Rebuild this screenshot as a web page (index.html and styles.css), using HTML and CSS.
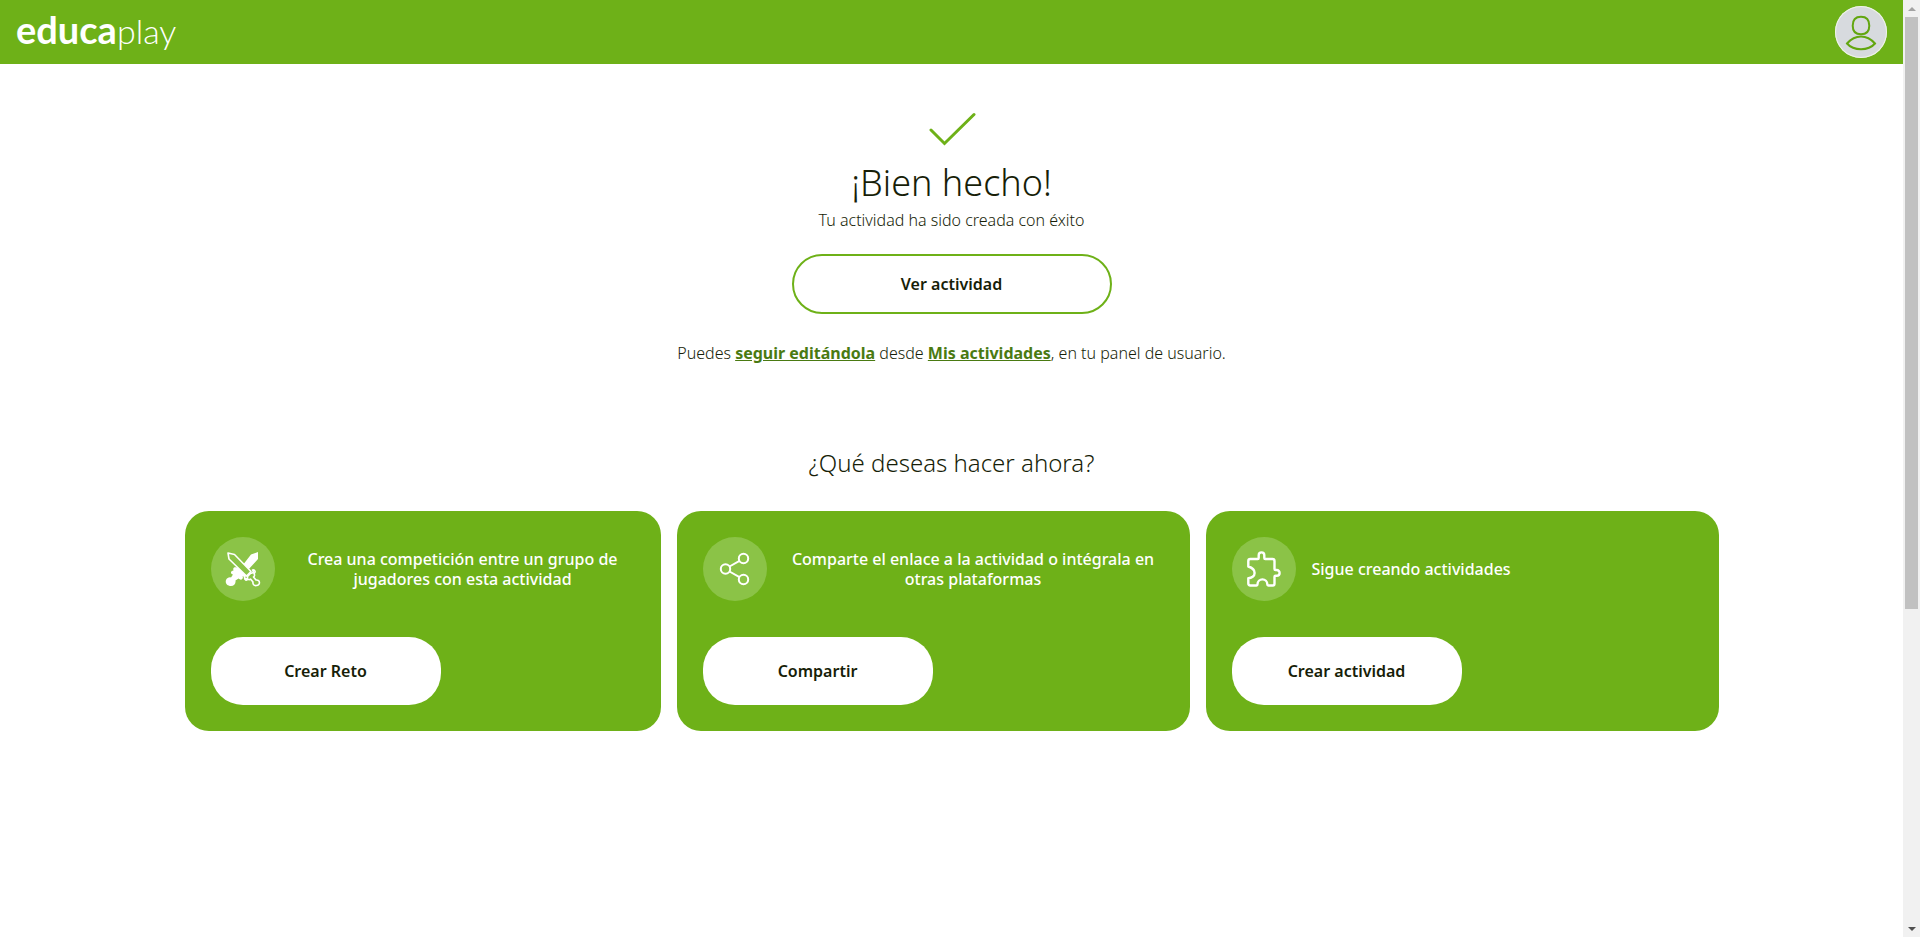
FILE: index.html
```html
<!DOCTYPE html>
<html lang="es">
<head>
<meta charset="utf-8">
<meta name="viewport" content="width=device-width, initial-scale=1">
<title>Educaplay</title>
<link rel="stylesheet" href="styles.css">
</head>
<body>
<div class="page">
  <header class="topbar">
    <a class="logo" href="#" aria-label="educaplay"><b>educa</b><span>play</span></a>
    <button class="avatar" type="button" aria-label="Usuario">
      <svg width="52" height="52" viewBox="0 0 52 52" fill="none" stroke="#62a60f" stroke-width="2">
        <path d="M26 10.800c5.500 0 8.300 3.600 8.300 8.900s-2.800 8.600-8.300 8.600-8.300-3.300-8.300-8.600 2.800-8.900 8.300-8.900z"/>
        <path d="M12 37.500C16 33 20.500 30.500 26 30.500S36 33 40 37.500C36.500 41.500 31.500 43.300 26 43.300S15.500 41.500 12 37.500z"/>
      </svg>
    </button>
  </header>

  <main class="main">
    <section class="done">
      <svg class="check" width="48" height="34" viewBox="0 0 48 34" fill="none" stroke="#6eb118" stroke-width="3" stroke-linecap="round"><path d="M3 18l13.500 13.500L46 2.500"/></svg>
      <h1 class="title">¡Bien hecho!</h1>
      <p class="text">Tu actividad ha sido creada con éxito</p>
      <button class="button button-outline" type="button">Ver actividad</button>
      <p class="text">Puedes <a class="link" href="#">seguir editándola</a> desde <a class="link" href="#">Mis actividades</a>, en tu panel de usuario.</p>
    </section>

    <h2 class="subtitle">¿Qué deseas hacer ahora?</h2>

    <section class="cards">
      <article class="card">
        <div class="card-head">
          <span class="badge">
            <svg width="36" height="36" viewBox="0 0 36 36" fill="none" stroke="#fff" stroke-width="1.600" stroke-linejoin="round">
              <path fill="#fff" stroke="none" d="M33 1v7L22.500 19.500l-5-5L26 3.500zM12 15l10 10-2 1c-1 0-2-.500-2.500-1 1.500 3-1.500 5-4 2.500l-3 2c.500 3-1.500 5.500-4.500 5.500-4 0-6-3-5-6 1-2 3-3 5-2.500l2-3c-3-.500-2.500-4 .500-4-1-3 1-4 3.500-3z"/>
              <path fill="#8bc347" d="M3 2l6.500 1.500L26 20.500l-4.500 4.500L4 8z"/>
              <path fill="#8bc347" d="M19.500 26.500c1.500 2.500 3.500 1 3-1l3.500-3.500c2 .500 3-1.500 1.500-3 2.500-.500 3.500 2 1.500 3.500 1 1.500.500 3-.500 3.500l2.500 3c4.500-.500 4.500 5.500.500 5.500-2.500.500-4-1.500-3.500-3.500L25.500 28c-1 1-2 .500-2.500 0-1.500 2-3.500 1-3.500-1.500z"/>
            </svg>
          </span>
          <p class="card-text">Crea una competición entre un grupo de jugadores con esta actividad</p>
        </div>
        <button class="button button-solid" type="button">Crear Reto</button>
      </article>

      <article class="card">
        <div class="card-head">
          <span class="badge">
            <svg width="32" height="34" viewBox="0 0 32 34" fill="none" stroke="#fff" stroke-width="2">
              <circle cx="6.500" cy="17" r="4.700"/><circle cx="24.500" cy="6.500" r="4.700"/><circle cx="24.500" cy="27.500" r="4.700"/>
              <path d="M10.500 14.500l10-5.700M10.500 19.500l10 5.700"/>
            </svg>
          </span>
          <p class="card-text">Comparte el enlace a la actividad o intégrala en otras plataformas</p>
        </div>
        <button class="button button-solid" type="button">Compartir</button>
      </article>

      <article class="card">
        <div class="card-head">
          <span class="badge">
            <svg width="36" height="38" viewBox="0 0 36 38" fill="none" stroke="#fff" stroke-width="2.400" stroke-linejoin="round">
              <path d="M4.300 9h7.400q1 0 1-1V5.200a2.800 2.800 0 0 1 5.600 0V8q0 1 1 1h7.200q2 0 2 2v8q0 1 1 1h1.200a2.900 2.900 0 0 1 0 5.800h-1.200q-1 0-1 1v6.700q0 2-1.700 2h-4.500q-1 0-1-1.200a4.900 4.900 0 0 0-9.800 0q0 1.200-1 1.200H4.300q-2 0-2-2v-5.300c3.200 0 6.300-2 6.300-5.300s-3.100-5.400-6.300-6.400V11q0-2 2-2z"/>
            </svg>
          </span>
          <p class="card-text">Sigue creando actividades</p>
        </div>
        <button class="button button-solid" type="button">Crear actividad</button>
      </article>
    </section>
  </main>
</div>
<div class="scrollbar" aria-hidden="true">
  <span class="arrow arrow-up"></span>
  <span class="thumb"></span>
  <span class="rest"></span>
  <span class="arrow arrow-down"></span>
</div>
</body>
</html>
```

FILE: styles.css
```css
* {
  box-sizing: border-box;
}

body {
  margin: 0;
  display: flex;
  min-height: 100vh;
  background: #fff;
  color: #171e08;
  font-family: "Noto Sans", "Open Sans", sans-serif;
  font-size: 16px;
  line-height: 20px;
}

.page {
  flex: 1;
  min-width: 0;
}

.topbar {
  display: flex;
  align-items: center;
  justify-content: space-between;
  height: 64px;
  padding: 0 16px;
  background: #6eb118;
}

.logo {
  padding-bottom: 4px;
  color: #fff;
  font-family: Lato, sans-serif;
  font-size: 34px;
  line-height: 56px;
  font-weight: 300;
  text-decoration: none;
}

.logo b {
  font-size: 38px;
  font-weight: 700;
}

.avatar {
  width: 52px;
  height: 52px;
  padding: 0;
  border: 0;
  border-radius: 50%;
  background: #d7dade;
  box-shadow: inset 0 0 0 1px #eef4e6;
}

.avatar svg {
  display: block;
}

.main {
  padding: 48px 24px;
}

.done {
  display: flex;
  flex-direction: column;
  align-items: center;
  text-align: center;
}

.check {
  display: block;
}

.title {
  margin: 13px 0 3px;
  font-size: 36px;
  line-height: 48px;
  font-weight: 300;
}

.text {
  margin: 0;
  font-weight: 300;
}

.link {
  color: #4a7a12;
  font-weight: 700;
}

.button {
  border: 0;
  background: #fff;
  color: #171e08;
  font: inherit;
  font-weight: 600;
}

.button-outline {
  width: 320px;
  max-width: 100%;
  height: 60px;
  margin: 24px 0 29px;
  border: 2px solid #6eb118;
  border-radius: 30px;
}

.subtitle {
  margin: 84px 0 32px;
  font-size: 24px;
  line-height: 32px;
  font-weight: 300;
  text-align: center;
}

.cards {
  display: grid;
  grid-template-columns: 476fr 513fr 513fr;
  gap: 16px;
  max-width: 1534px;
  margin: 0 auto;
}

.card {
  display: flex;
  flex-direction: column;
  align-items: flex-start;
  gap: 36px;
  padding: 26px;
  border-radius: 24px;
  background: #6eb118;
  color: #fff;
}

.card-head {
  display: flex;
  align-items: center;
  gap: 16px;
  width: 100%;
}

.badge {
  display: flex;
  flex: none;
  align-items: center;
  justify-content: center;
  width: 64px;
  height: 64px;
  border-radius: 50%;
  background: #8bc347;
}

.card-text {
  flex: 1;
  margin: 0;
  font-weight: 500;
  text-align: center;
}

.card:last-child .card-text {
  flex: none;
}

.button-solid {
  width: 230px;
  height: 68px;
  border-radius: 32px;
}

.scrollbar {
  display: flex;
  flex: none;
  flex-direction: column;
  align-items: center;
  width: 17px;
  background: #f1f1f1;
}

.arrow {
  display: flex;
  align-items: center;
  justify-content: center;
  height: 17px;
}

.arrow::before {
  content: "";
  border: 4px solid transparent;
}

.arrow-up::before {
  border-top: 0;
  border-bottom-color: #a3a3a3;
}

.arrow-down::before {
  border-bottom: 0;
  border-top-color: #505050;
}

.thumb {
  flex: 592;
  width: 13px;
  background: #c1c1c1;
}

.rest {
  flex: 311;
}
```
